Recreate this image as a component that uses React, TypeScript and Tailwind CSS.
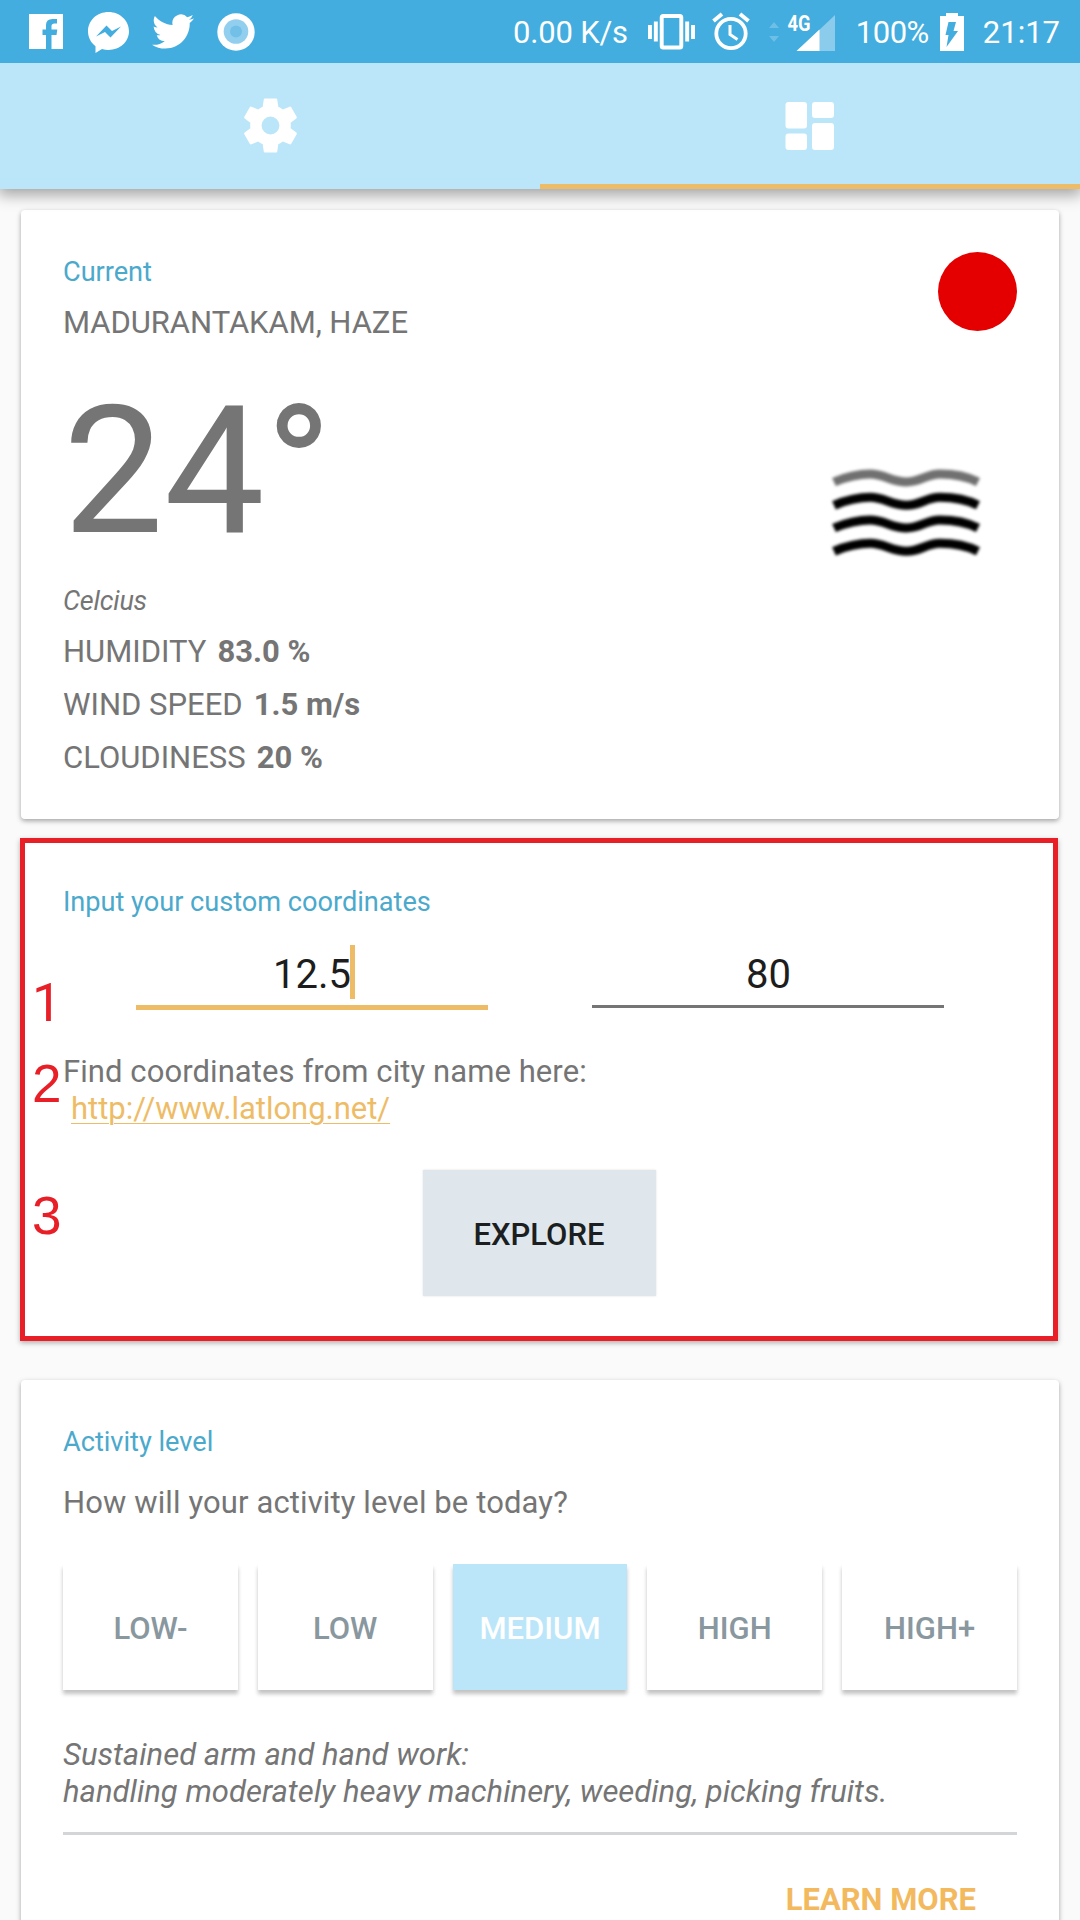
import type { ReactNode } from "react";

function FacebookIcon() {
  return (
    <svg className="h-[35px] w-[34px]" viewBox="0 0 34 35" fill="#fff">
      <path d="M0 0h34v35H22.500V21h5l.8-5.500h-5.800v-3.500q0-2.500 3-2.500h2.500V5h-4.500Q17 5 17 11v4.500h-3.500V21H17v14H0z" />
    </svg>
  );
}

function MessengerIcon() {
  return (
    <svg className="h-[41px] w-[41px]" viewBox="0 0 41 41">
      <path
        fill="#fff"
        d="M20.500 0C9 0 0 8.500 0 19.200c0 6.300 3 11.500 7.500 15V41l6.500-4c2 .6 4.200.9 6.500.9C32 37.900 41 29.700 41 19.200S32 0 20.500 0z"
      />
      <path fill="#42adde" d="M8 24.500 18.500 13.500l5.500 5.500 9-4.500L22.500 25.500 17 20z" />
    </svg>
  );
}

function TwitterIcon() {
  return (
    <svg className="h-[35px] w-[42px]" viewBox="0 2 24 20" preserveAspectRatio="none" fill="#fff">
      <path d="M23.953 4.570a10 10 0 01-2.825.775 4.958 4.958 0 002.163-2.723c-.951.555-2.005.959-3.127 1.184a4.920 4.920 0 00-8.384 4.482C7.690 8.095 4.067 6.130 1.640 3.162a4.822 4.822 0 00-.666 2.475c0 1.710.870 3.213 2.188 4.096a4.904 4.904 0 01-2.228-.616v.060a4.923 4.923 0 003.946 4.827 4.996 4.996 0 01-2.212.085 4.936 4.936 0 004.604 3.417 9.867 9.867 0 01-6.102 2.105c-.390 0-.779-.023-1.170-.067a13.995 13.995 0 007.557 2.209c9.053 0 13.998-7.496 13.998-13.985 0-.210 0-.420-.015-.630A9.935 9.935 0 0024 4.590z" />
    </svg>
  );
}

function RecorderIcon() {
  return (
    <svg className="h-[38px] w-[38px]" viewBox="0 0 38 38">
      <circle cx="19" cy="19" r="18.700" fill="#fff" />
      <circle cx="19" cy="18.500" r="12.300" fill="#92cfee" />
      <circle cx="19" cy="18.500" r="6" fill="#72c0e8" />
    </svg>
  );
}

function VibrateIcon() {
  return (
    <svg className="h-[36px] w-[47px]" viewBox="0 0 48 36" preserveAspectRatio="none" fill="#fff">
      <path d="M0 11h4v14H0zM6 7.500h4v20H6zM38 7.500h4v20h-4zM44 11h4v14h-4z" />
      <rect x="14" y="2" width="20" height="31.500" rx="1.500" fill="none" stroke="#fff" strokeWidth="4" />
    </svg>
  );
}

function AlarmIcon() {
  return (
    <svg className="h-[39px] w-[38px]" viewBox="0 0 38 39" fill="none" stroke="#fff">
      <circle cx="19" cy="21.500" r="14.700" strokeWidth="3.800" />
      <path d="M18 13v9.500l7.500 5" strokeWidth="3" />
      <path d="M1.500 9 10 2M36.500 9 28 2" strokeWidth="4" />
    </svg>
  );
}

function SignalIcon() {
  return (
    <svg className="-mt-[6px] h-[44px] w-[67px]" viewBox="0 -6 67 44">
      <path fill="#8bcbec" d="M0 15l5-6 5 6zM0 23h10l-5 6z" opacity=".6" />
      <path fill="#8bcbec" d="M66 2v36H28z" />
      <path fill="#fff" d="M50.500 16.500V38H27.500z" />
      <text
        x="18.500"
        y="17.500"
        fill="#fff"
        fontFamily="Roboto, sans-serif"
        fontWeight="700"
        fontSize="21.500"
        textLength="23"
        lengthAdjust="spacingAndGlyphs"
      >
        4G
      </text>
    </svg>
  );
}

function BatteryIcon() {
  return (
    <svg className="h-[38px] w-[24px]" viewBox="0 0 24 38">
      <path fill="#fff" d="M6 0h12v3h6v35H0V3h6z" />
      <path fill="#42adde" d="M8.500 9H16l-2.500 9H18L6.500 34l2-12H5.500z" />
    </svg>
  );
}

function SettingsIcon() {
  return (
    <svg className="h-[65px] w-[65px]" viewBox="0 0 24 24" fill="#fff">
      <path d="M19.430 12.980c.04-.32.07-.64.07-.98s-.03-.66-.07-.98l2.110-1.650c.19-.15.24-.42.12-.64l-2-3.460c-.12-.22-.39-.3-.61-.22l-2.490 1c-.52-.4-1.080-.73-1.690-.98l-.38-2.650C14.460 2.180 14.250 2 14 2h-4c-.25 0-.46.18-.49.42l-.38 2.650c-.61.25-1.170.59-1.690.98l-2.490-1c-.23-.09-.49 0-.61.22l-2 3.460c-.13.22-.07.49.12.64l2.110 1.650c-.04.32-.07.65-.07.98s.03.66.07.98l-2.110 1.650c-.19.15-.24.42-.12.64l2 3.460c.12.22.39.3.61.22l2.490-1c.52.4 1.080.73 1.690.98l.38 2.650c.03.24.24.42.49.42h4c.25 0 .46-.18.49-.42l.38-2.650c.61-.25 1.170-.59 1.690-.98l2.490 1c.23.09.49 0 .61-.22l2-3.460c.12-.22.07-.49-.12-.64l-2.110-1.650zM12 15.300a3.300 3.300 0 1 1 0-6.600 3.300 3.300 0 0 1 0 6.600z" />
    </svg>
  );
}

function DashboardIcon() {
  return (
    <svg className="h-[48px] w-[50px]" viewBox="0 0 50 48" fill="#fff">
      <rect x="0.500" y="0" width="21.500" height="26.500" rx="3" />
      <rect x="0.500" y="31.500" width="21.500" height="16.500" rx="3" />
      <rect x="27" y="0" width="22" height="16" rx="3" />
      <rect x="27" y="21" width="22" height="27" rx="3" />
    </svg>
  );
}

function HazeIcon() {
  const wave = "M2 14C13 9 28 6 38 6C52 6 60 14 74.500 14C89 14 94 6 108 6C121 6 136 9 146 14";
  return (
    <svg className="h-[92px] w-[148px] blur-[1.700px]" viewBox="0 0 148 92" fill="none" strokeWidth="9">
      <path d={wave} stroke="#707070" />
      <path d={wave} stroke="#000" transform="translate(0 23.300)" />
      <path d={wave} stroke="#000" transform="translate(0 46)" />
      <path d={wave} stroke="#000" transform="translate(0 69.300)" />
    </svg>
  );
}

function Metric({ label, value }: { label: string; value: string }) {
  return (
    <p className="flex h-[40px] gap-[11px] text-[31px] leading-[40px]">
      <span>{label}</span>
      <b>{value}</b>
    </p>
  );
}

function CardTitle({ children }: { children: ReactNode }) {
  return <h2 className="text-[27.200px] leading-[42px] tracking-[-0.03px] text-[#4ba9cc]">{children}</h2>;
}

const levels = ["LOW-", "LOW", "MEDIUM", "HIGH", "HIGH+"];

export default function App() {
  return (
    <div className="flex h-[1920px] w-[1080px] flex-col overflow-hidden bg-[#fafafa] font-[Roboto,sans-serif] text-[#757575]">
      <header className="relative z-10 shrink-0 shadow-[0_4px_14px_2px_rgba(0,0,0,0.35)]">
        <div className="flex h-[63px] items-center justify-between bg-[#42adde] pr-[20px] pl-[29px] text-[31px] text-white">
          <div className="flex items-center">
            <FacebookIcon />
            <div className="ml-[25px] pt-[2px]">
              <MessengerIcon />
            </div>
            <div className="ml-[23px]">
              <TwitterIcon />
            </div>
            <div className="ml-[23px]">
              <RecorderIcon />
            </div>
          </div>
          <div className="flex items-center">
            <span className="mt-[4px] mr-[20px] tracking-[-0.2px]">0.00 K/s</span>
            <VibrateIcon />
            <div className="ml-[17px]">
              <AlarmIcon />
            </div>
            <div className="ml-[19px]">
              <SignalIcon />
            </div>
            <span className="mt-[4px] ml-[20px] tracking-[-0.5px]">100%</span>
            <div className="ml-[11px]">
              <BatteryIcon />
            </div>
            <span className="mt-[3px] ml-[19px]">21:17</span>
          </div>
        </div>
        <nav className="grid h-[126px] grid-cols-2 bg-[#bbe6f9]">
          <button className="flex items-center justify-center pb-[1px]">
            <SettingsIcon />
          </button>
          <button className="flex items-center justify-center border-b-[5px] border-[#eebc66] pt-[5px]">
            <DashboardIcon />
          </button>
        </nav>
      </header>

      <main className="flex flex-col px-[21px] pt-[21px]">
        <section className="flex h-[609px] justify-between rounded-[4px] bg-white pt-[41px] pr-[42px] pl-[42px] shadow-[0_2px_5px_rgba(0,0,0,0.35)]">
          <div>
            <CardTitle>Current</CardTitle>
            <p className="mt-[10px] text-[31px] leading-[40px] tracking-[-0.05px]">MADURANTAKAM, HAZE</p>
            <p className="mt-[38px] text-[179px] leading-[180px] tracking-[0.5px]">24°</p>
            <p className="mt-[20px] text-[27px] leading-[40px] tracking-[-0.2px] italic">Celcius</p>
            <div className="mt-[11px] flex flex-col gap-[13px]">
              <Metric label="HUMIDITY" value="83.0 %" />
              <Metric label="WIND SPEED" value="1.5 m/s" />
              <Metric label="CLOUDINESS" value="20 %" />
            </div>
          </div>
          <div className="flex flex-col items-end">
            <div className="mt-[1px] size-[79px] rounded-full bg-[#e40000]" />
            <div className="mt-[137px] mr-[37px]">
              <HazeIcon />
            </div>
          </div>
        </section>

        <section className="relative mt-[19px] -ml-px h-[503px] w-[1038px] border-[5px] border-[#e81f27] bg-white px-[38px] pt-[38px] shadow-[0_2px_5px_rgba(0,0,0,0.3)]">
          <CardTitle>Input your custom coordinates</CardTitle>
          <div className="mt-[28px] flex gap-[104px] pl-[73px] text-[40px] leading-[48px] text-[#1d1d1d]">
            <div className="h-[59px] w-[352px] border-b-[5px] border-[#eebc66] text-center">
              <span className="relative">
                12.5
                <i className="absolute -top-[6px] -right-[4px] h-[54px] w-[5px] bg-[#eebc66]" />
              </span>
            </div>
            <div className="h-[57px] w-[352px] border-b-[3px] border-[#757575] pl-[1px] text-center">80</div>
          </div>
          <p className="mt-[43px] text-[31px] leading-[37px] tracking-[0.08px]">
            Find coordinates from city name here:
            <br />
            <a className="ml-[8px] tracking-[-0.02px] text-[#eebc66] underline decoration-1 underline-offset-[4px]">
              http://www.latlong.net/
            </a>
          </p>
          <button className="mx-auto mt-[43px] block h-[126px] w-[233px] bg-[#e0e7ec] pt-[4px] text-[31px] font-medium text-[#1b1f22] shadow-[0_0_2px_rgba(0,0,0,0.12)]">
            EXPLORE
          </button>
          <div className="absolute top-[130px] left-[7px] flex flex-col font-['Liberation_Sans',Arial,sans-serif] text-[53px] leading-[60px] text-[#e81f27]">
            <span className="font-[Roboto,sans-serif]">1</span>
            <span className="mt-[21px]">2</span>
            <span className="mt-[72px]">3</span>
          </div>
        </section>

        <section className="mt-[39px] h-[600px] rounded-[4px] bg-white px-[42px] pt-[41px] shadow-[0_2px_5px_rgba(0,0,0,0.35)]">
          <CardTitle>Activity level</CardTitle>
          <p className="mt-[20px] text-[31px] leading-[40px] tracking-[0.12px]">How will your activity level be today?</p>
          <div className="mt-[41px] grid h-[126px] grid-cols-5 gap-[20px] text-[31px] font-medium text-[#89979f]">
            {levels.map((level) => (
              <button
                key={level}
                className={
                  level === "MEDIUM"
                    ? "bg-[#bbe6f9] pt-[5px] text-white shadow-[0_4px_4px_rgba(0,0,0,0.24)]"
                    : "bg-white pt-[5px] shadow-[0_4px_4px_rgba(0,0,0,0.24)]"
                }
              >
                {level}
              </button>
            ))}
          </div>
          <p className="mt-[46px] text-[31px] leading-[37px] tracking-[0.02px] italic">
            Sustained arm and hand work:
            <br />
            handling moderately heavy machinery, weeding, picking fruits.
          </p>
          <hr className="mt-[22px] h-[3px] border-0 bg-[#d3d6d8]" />
          <p className="mt-[45px] mr-[41px] text-right text-[31px] leading-[40px] font-bold text-[#f3b95f]">LEARN MORE</p>
        </section>
      </main>
    </div>
  );
}
